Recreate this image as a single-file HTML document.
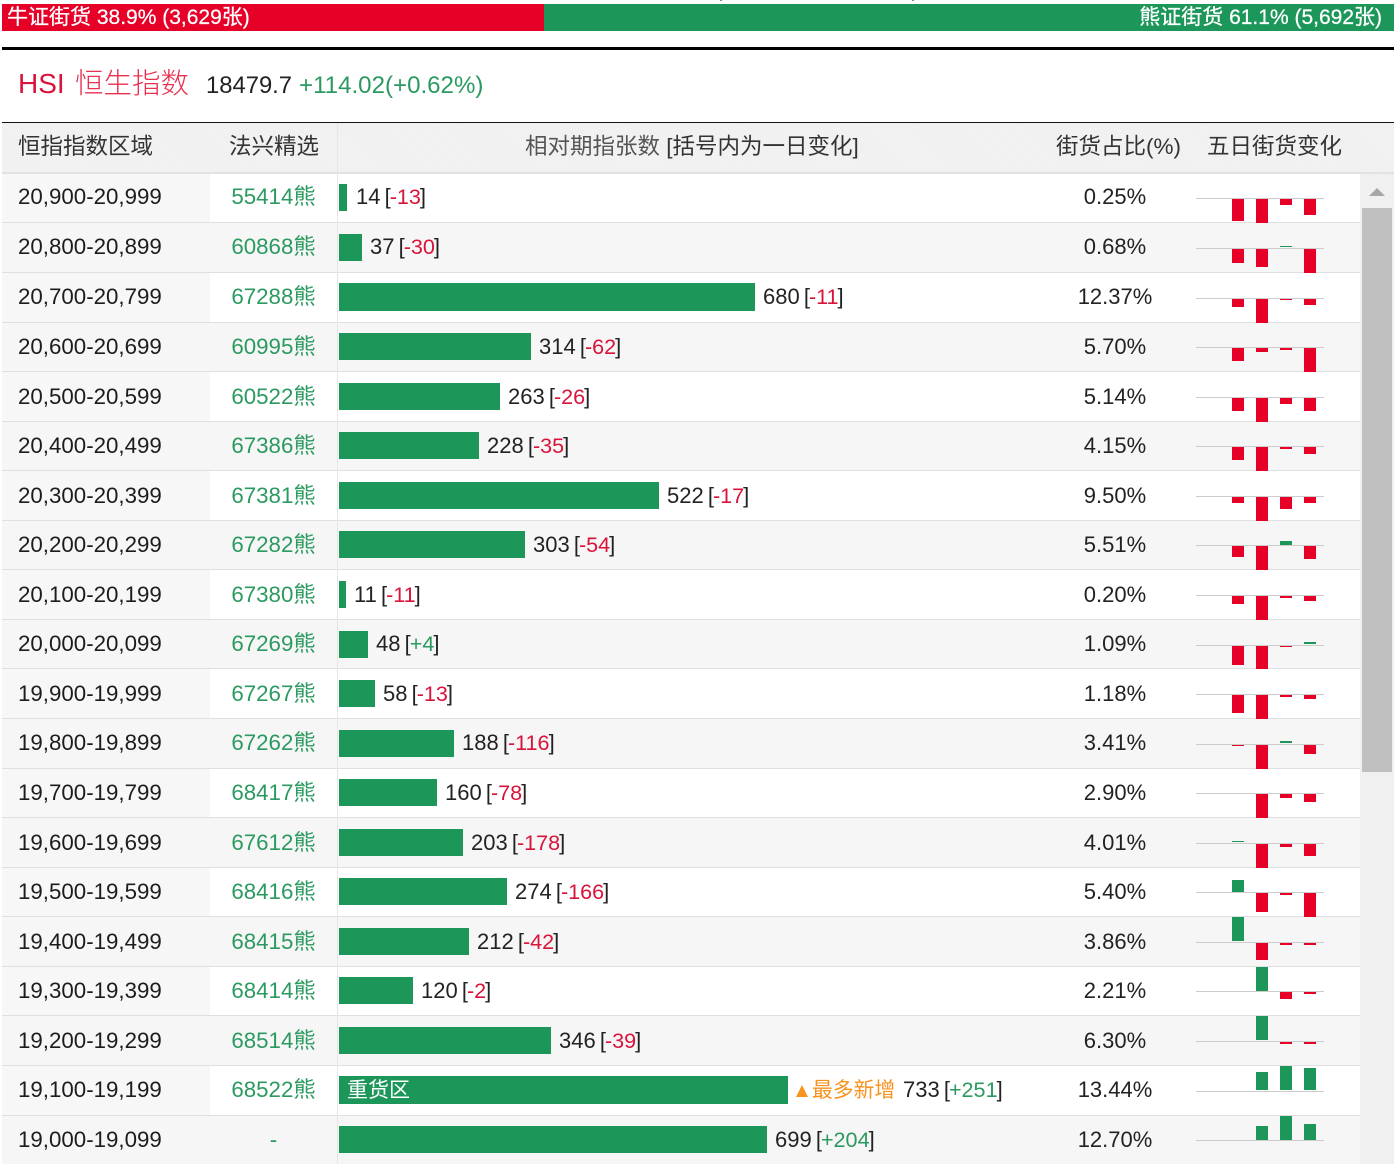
<!DOCTYPE html>
<html lang="zh"><head><meta charset="utf-8"><title>HSI 恒生指数</title>
<style>
html,body{margin:0;padding:0;background:#fff}
body{width:1398px;height:1164px;position:relative;overflow:hidden;font-family:"Liberation Sans","Noto Sans CJK SC",sans-serif;color:#222;font-size:22px}
div,span,i,b{position:absolute;white-space:nowrap;font-style:normal;font-weight:normal}
em{font-style:normal}
.bar{top:4px;height:27px;line-height:28px;color:#fff;font-size:21px;-webkit-text-stroke:.25px #fff}
.th{top:123px;left:2px;width:1392px;height:49px;background:#f1f1f1;background-image:repeating-linear-gradient(45deg,#eee 0 1px,#f4f4f4 1px 2px)}
.h{top:132px;line-height:30px;font-size:22.5px;color:#333}
.row{left:2px;width:1358px;box-sizing:border-box;border-bottom:1px solid #e0e0e0;background:#fff}
.e{background:#f6f6f6}
.f{left:0;top:0;bottom:0;width:208px;background:#f7f7f7}
.c{left:0;top:0;width:1358px;height:50px}
.u .c{top:-1px}
.t{top:11px;line-height:28px}
.a{left:16px;font-size:22.3px;color:#1c1c1c}
.w{left:208px;width:127px;text-align:center;color:#2b9a60;font-size:22.3px}
.g{left:337px;top:11px;height:27px;background:#1c9759}
.n{top:11px;line-height:28px;word-spacing:-2px}
.n em{font-size:21.6px;margin:0 -1px}
.d .t,.d .n{top:10px}
.r{color:#d9133a}.p{color:#2b9a60}
.o{left:1000px;width:226px;text-align:center}
.x{left:1194px;top:25px;width:128px;height:1px;background:#ccc}
.k{width:12px;background:#e60028;top:26px}
.y{width:12px;background:#1c9759}
.k1,.y1{left:1230px}.k2,.y2{left:1254px}.k3,.y3{left:1278px}.k4,.y4{left:1302px}
</style></head><body>
<div style="left:720px;top:0;width:2px;height:1px;background:#888"></div>
<div style="left:912px;top:0;width:2px;height:1px;background:#888"></div>
<div class="bar" style="left:2px;width:542px;background:#e60028;text-indent:5px">牛证街货 38.9% (3,629张)</div>
<div class="bar" style="left:544px;width:850px;background:#1c9759;text-align:right"><span style="right:12px;top:0">熊证街货 61.1% (5,692张)</span></div>
<div style="left:2px;top:47px;width:1392px;height:3px;background:#000"></div>
<div style="left:18px;top:66px;line-height:36px;font-size:28px;color:#d9133a">HSI</div>
<div style="left:75px;top:66px;line-height:36px;font-size:28.5px;font-weight:300;color:#e8304f">恒生指数</div>
<div style="left:206px;top:70px;line-height:32px;font-size:23.8px;color:#222">18479.7</div>
<div style="left:299px;top:70px;line-height:32px;font-size:24.1px;color:#2b9a60">+114.02(+0.62%)</div>
<div style="left:2px;top:122px;width:1392px;height:1px;background:#111"></div>
<div class="th"></div>
<div style="left:2px;top:172px;width:1392px;height:2px;background:#e2e2e2"></div>
<div style="left:337px;top:123px;width:1px;height:1041px;background:#e6e6e6;z-index:3"></div>
<div class="h" style="left:18px">恒指指数区域</div>
<div class="h" style="left:229px">法兴精选</div>
<div class="h" style="left:525px"><em style="color:#555">相对期指张数</em> [括号内为一日变化]</div>
<div class="h" style="left:1056px">街货占比(%)</div>
<div class="h" style="left:1207px">五日街货变化</div>

<div class="row d" style="top:174px;height:49px"><div class="f"></div><div class="c" style="top:-1px"><span class="t a">20,900-20,999</span><span class="t w">55414熊</span><i class="g" style="width:8px"></i><span class="n" style="left:354px">14 [<em class="r">-13</em>]</span><span class="t o">0.25%</span><i class="x"></i><i class="k k1" style="height:22px"></i><i class="k k2" style="height:24px"></i><i class="k k3" style="height:6px"></i><i class="k k4" style="height:16px"></i></div></div>
<div class="row e d" style="top:223px;height:50px"><div class="c"><span class="t a">20,800-20,899</span><span class="t w">60868熊</span><i class="g" style="width:23px"></i><span class="n" style="left:368px">37 [<em class="r">-30</em>]</span><span class="t o">0.68%</span><i class="x"></i><i class="k k1" style="height:14px"></i><i class="k k2" style="height:18px"></i><i class="y y3" style="top:23px;height:1px"></i><i class="k k4" style="height:24px"></i></div></div>
<div class="row d" style="top:273px;height:50px"><div class="f"></div><div class="c"><span class="t a">20,700-20,799</span><span class="t w">67288熊</span><i class="g" style="width:416px;top:10px;height:28px"></i><span class="n" style="left:761px">680 [<em class="r">-11</em>]</span><span class="t o">12.37%</span><i class="x"></i><i class="k k1" style="height:8px"></i><i class="k k2" style="height:24px"></i><i class="k k3" style="height:1px"></i><i class="k k4" style="height:6px"></i></div></div>
<div class="row e u" style="top:323px;height:49px"><div class="c"><span class="t a">20,600-20,699</span><span class="t w">60995熊</span><i class="g" style="width:192px"></i><span class="n" style="left:537px">314 [<em class="r">-62</em>]</span><span class="t o">5.70%</span><i class="x"></i><i class="k k1" style="height:13px"></i><i class="k k2" style="height:4px"></i><i class="k k3" style="height:2px"></i><i class="k k4" style="height:24px"></i></div></div>
<div class="row" style="top:372px;height:50px"><div class="f"></div><div class="c"><span class="t a">20,500-20,599</span><span class="t w">60522熊</span><i class="g" style="width:161px"></i><span class="n" style="left:506px">263 [<em class="r">-26</em>]</span><span class="t o">5.14%</span><i class="x"></i><i class="k k1" style="height:13px"></i><i class="k k2" style="height:24px"></i><i class="k k3" style="height:6px"></i><i class="k k4" style="height:13px"></i></div></div>
<div class="row e u" style="top:422px;height:49px"><div class="c"><span class="t a">20,400-20,499</span><span class="t w">67386熊</span><i class="g" style="width:140px"></i><span class="n" style="left:485px">228 [<em class="r">-35</em>]</span><span class="t o">4.15%</span><i class="x"></i><i class="k k1" style="height:13px"></i><i class="k k2" style="height:24px"></i><i class="k k3" style="height:2px"></i><i class="k k4" style="height:7px"></i></div></div>
<div class="row" style="top:471px;height:50px"><div class="f"></div><div class="c"><span class="t a">20,300-20,399</span><span class="t w">67381熊</span><i class="g" style="width:320px"></i><span class="n" style="left:665px">522 [<em class="r">-17</em>]</span><span class="t o">9.50%</span><i class="x"></i><i class="k k1" style="height:6px"></i><i class="k k2" style="height:24px"></i><i class="k k3" style="height:12px"></i><i class="k k4" style="height:6px"></i></div></div>
<div class="row e u" style="top:521px;height:49px"><div class="c"><span class="t a">20,200-20,299</span><span class="t w">67282熊</span><i class="g" style="width:186px"></i><span class="n" style="left:531px">303 [<em class="r">-54</em>]</span><span class="t o">5.51%</span><i class="x"></i><i class="k k1" style="height:11px"></i><i class="k k2" style="height:24px"></i><i class="y y3" style="top:21px;height:4px"></i><i class="k k4" style="height:13px"></i></div></div>
<div class="row" style="top:570px;height:50px"><div class="f"></div><div class="c"><span class="t a">20,100-20,199</span><span class="t w">67380熊</span><i class="g" style="width:7px"></i><span class="n" style="left:352px">11 [<em class="r">-11</em>]</span><span class="t o">0.20%</span><i class="x"></i><i class="k k1" style="height:8px"></i><i class="k k2" style="height:24px"></i><i class="k k3" style="height:2px"></i><i class="k k4" style="height:5px"></i></div></div>
<div class="row e d" style="top:620px;height:49px"><div class="c"><span class="t a">20,000-20,099</span><span class="t w">67269熊</span><i class="g" style="width:29px"></i><span class="n" style="left:374px">48 [<em class="p">+4</em>]</span><span class="t o">1.09%</span><i class="x"></i><i class="k k1" style="height:19px"></i><i class="k k2" style="height:24px"></i><i class="k k3" style="height:1px"></i><i class="y y4" style="top:22px;height:2px"></i></div></div>
<div class="row" style="top:669px;height:50px"><div class="f"></div><div class="c"><span class="t a">19,900-19,999</span><span class="t w">67267熊</span><i class="g" style="width:36px"></i><span class="n" style="left:381px">58 [<em class="r">-13</em>]</span><span class="t o">1.18%</span><i class="x"></i><i class="k k1" style="height:18px"></i><i class="k k2" style="height:24px"></i><i class="k k3" style="height:2px"></i><i class="k k4" style="height:4px"></i></div></div>
<div class="row e d" style="top:719px;height:50px"><div class="c"><span class="t a">19,800-19,899</span><span class="t w">67262熊</span><i class="g" style="width:115px"></i><span class="n" style="left:460px">188 [<em class="r">-116</em>]</span><span class="t o">3.41%</span><i class="x"></i><i class="k k1" style="height:1px"></i><i class="k k2" style="height:24px"></i><i class="y y3" style="top:22px;height:2px"></i><i class="k k4" style="height:9px"></i></div></div>
<div class="row u" style="top:769px;height:49px"><div class="f"></div><div class="c"><span class="t a">19,700-19,799</span><span class="t w">68417熊</span><i class="g" style="width:98px"></i><span class="n" style="left:443px">160 [<em class="r">-78</em>]</span><span class="t o">2.90%</span><i class="x"></i><i class="k k2" style="height:24px"></i><i class="k k3" style="height:4px"></i><i class="k k4" style="height:8px"></i></div></div>
<div class="row e" style="top:818px;height:50px"><div class="c"><span class="t a">19,600-19,699</span><span class="t w">67612熊</span><i class="g" style="width:124px"></i><span class="n" style="left:469px">203 [<em class="r">-178</em>]</span><span class="t o">4.01%</span><i class="x"></i><i class="y y1" style="top:23px;height:1px"></i><i class="k k2" style="height:24px"></i><i class="k k3" style="height:3px"></i><i class="k k4" style="height:12px"></i></div></div>
<div class="row u" style="top:868px;height:49px"><div class="f"></div><div class="c"><span class="t a">19,500-19,599</span><span class="t w">68416熊</span><i class="g" style="width:168px"></i><span class="n" style="left:513px">274 [<em class="r">-166</em>]</span><span class="t o">5.40%</span><i class="x"></i><i class="y y1" style="top:13px;height:12px"></i><i class="k k2" style="height:19px"></i><i class="k k3" style="height:2px"></i><i class="k k4" style="height:24px"></i></div></div>
<div class="row e" style="top:917px;height:50px"><div class="c"><span class="t a">19,400-19,499</span><span class="t w">68415熊</span><i class="g" style="width:130px"></i><span class="n" style="left:475px">212 [<em class="r">-42</em>]</span><span class="t o">3.86%</span><i class="x"></i><i class="y y1" style="top:0;height:24px"></i><i class="k k2" style="height:17px"></i><i class="k k3" style="height:2px"></i><i class="k k4" style="height:2px"></i></div></div>
<div class="row u" style="top:967px;height:49px"><div class="f"></div><div class="c"><span class="t a">19,300-19,399</span><span class="t w">68414熊</span><i class="g" style="width:74px"></i><span class="n" style="left:419px">120 [<em class="r">-2</em>]</span><span class="t o">2.21%</span><i class="x"></i><i class="y y2" style="top:1px;height:24px"></i><i class="k k3" style="height:7px"></i><i class="k k4" style="height:2px"></i></div></div>
<div class="row e" style="top:1016px;height:50px"><div class="c"><span class="t a">19,200-19,299</span><span class="t w">68514熊</span><i class="g" style="width:212px"></i><span class="n" style="left:557px">346 [<em class="r">-39</em>]</span><span class="t o">6.30%</span><i class="x"></i><i class="y y2" style="top:0;height:24px"></i><i class="k k3" style="height:2px"></i><i class="k k4" style="height:2px"></i></div></div>
<div class="row d" style="top:1066px;height:50px"><div class="f"></div><div class="c"><span class="t a">19,100-19,199</span><span class="t w">68522熊</span><i class="g" style="width:449px;top:10px;height:28px"></i><span class="n" style="left:345px;top:11px;color:#fff;font-size:21px">重货区</span><i style="left:794px;top:19px;width:0;height:0;border-left:6px solid transparent;border-right:6px solid transparent;border-bottom:12px solid #f7931e"></i><span class="n" style="left:810px;top:11px;color:#f7931e;font-size:20.8px">最多新增</span><span class="n" style="left:901px">733 [<em class="p">+251</em>]</span><span class="t o">13.44%</span><i class="x"></i><i class="y y2" style="top:6px;height:18px"></i><i class="y y3" style="top:0;height:24px"></i><i class="y y4" style="top:2px;height:22px"></i></div></div>
<div class="row e u" style="top:1116px;height:48px;border-bottom:0"><div class="c"><span class="t a">19,000-19,099</span><span class="t w">-</span><i class="g" style="width:428px"></i><span class="n" style="left:773px">699 [<em class="p">+204</em>]</span><span class="t o">12.70%</span><i class="x"></i><i class="y y2" style="top:11px;height:14px"></i><i class="y y3" style="top:1px;height:24px"></i><i class="y y4" style="top:9px;height:16px"></i></div></div>

<div style="left:1360px;top:174px;width:34px;height:990px;background:#f0f0f0"></div>
<div style="left:1369px;top:188px;width:0;height:0;border-left:8px solid transparent;border-right:8px solid transparent;border-bottom:8px solid #a6a6a6"></div>
<div style="left:1362px;top:208px;width:30px;height:564px;background:#c0c0c0"></div>
</body></html>
